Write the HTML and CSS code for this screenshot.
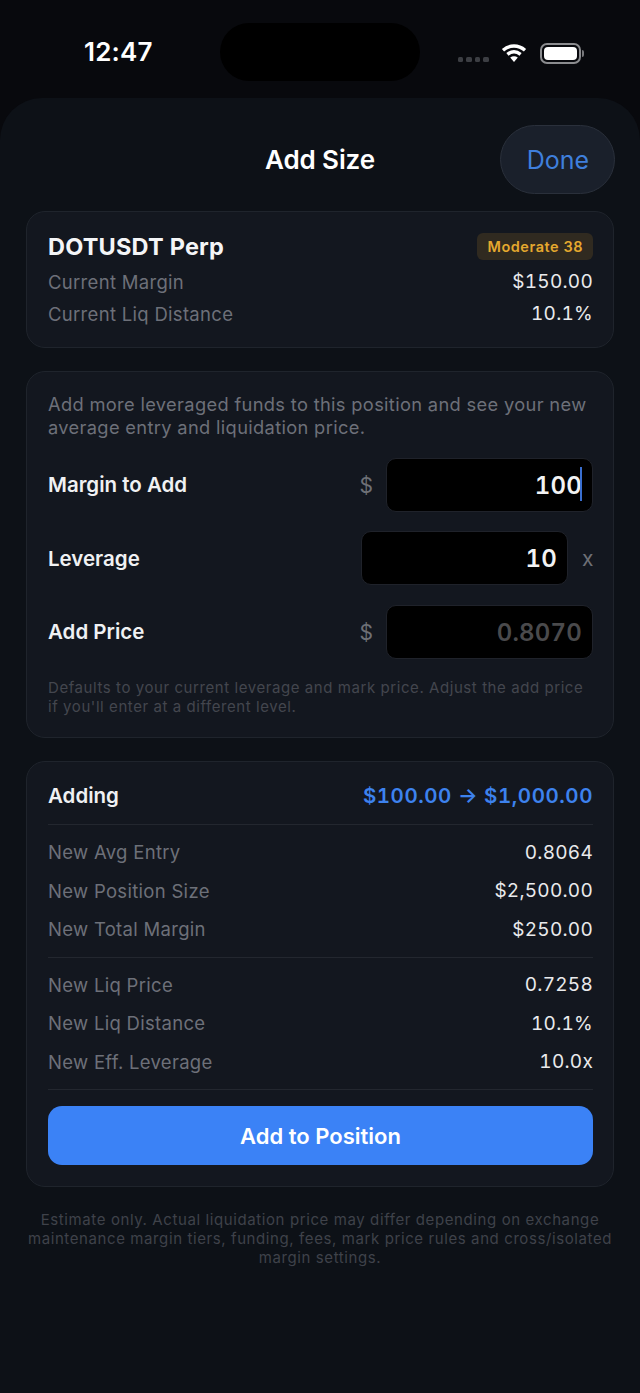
FILE: index.html
```html
<!DOCTYPE html>
<html lang="en">
<head>
<meta charset="utf-8">
<title>Add Size</title>
<link rel="stylesheet" href="styles.css">
</head>
<body>
<div class="screen">
  <div class="status">
    <span class="time">12:47</span>
    <div class="island"></div>
    <div class="status-icons">
      <div class="signal"><i></i><i></i><i></i><i></i></div>
      <svg class="wifi" width="26" height="20" viewBox="0 0 26 20"><path d="M2 7.2C8.6 1.6 17.4 1.6 24 7.2" fill="none" stroke="#fff" stroke-width="3.4"/><path d="M6.4 11.4C10.6 8 15.4 8 19.6 11.4" fill="none" stroke="#fff" stroke-width="3.4"/><path d="M9.2 14.6C11.6 12.8 14.4 12.8 16.8 14.6L13 19Z" fill="#fff"/></svg>
      <div class="battery"><div class="battery-fill"></div></div>
      <div class="battery-cap"></div>
    </div>
  </div>
  <main class="sheet">
    <header class="head">
      <h1 class="title">Add Size</h1>
      <button class="done">Done</button>
    </header>
    <section class="card card-a">
      <div class="row-top">
        <span class="symbol">DOTUSDT Perp</span>
        <span class="badge">Moderate 38</span>
      </div>
      <div class="row row-a"><span class="lbl">Current Margin</span><span class="val">$150.00</span></div>
      <div class="row row-a"><span class="lbl">Current Liq Distance</span><span class="val">10.1%</span></div>
    </section>
    <section class="card card-b">
      <p class="intro">Add more leveraged funds to this position and see your new average entry and liquidation price.</p>
      <div class="field">
        <span class="field-lbl">Margin to Add</span>
        <span class="unit unit-l">$</span>
        <div class="input"><span class="typed">100</span><span class="caret"></span></div>
      </div>
      <div class="field">
        <span class="field-lbl">Leverage</span>
        <div class="input input-wide"><span>10</span></div>
        <span class="unit unit-r">x</span>
      </div>
      <div class="field">
        <span class="field-lbl">Add Price</span>
        <span class="unit unit-l">$</span>
        <div class="input input-ph"><span>0.8070</span></div>
      </div>
      <p class="hint">Defaults to your current leverage and mark price. Adjust the add price if you'll enter at a different level.</p>
    </section>
    <section class="card card-c">
      <div class="adding">
        <span class="adding-lbl">Adding</span>
        <span class="adding-val">$100.00 → $1,000.00</span>
      </div>
      <div class="group">
        <div class="row row-c"><span class="lbl">New Avg Entry</span><span class="val">0.8064</span></div>
        <div class="row row-c"><span class="lbl">New Position Size</span><span class="val">$2,500.00</span></div>
        <div class="row row-c"><span class="lbl">New Total Margin</span><span class="val">$250.00</span></div>
      </div>
      <div class="group">
        <div class="row row-c"><span class="lbl">New Liq Price</span><span class="val">0.7258</span></div>
        <div class="row row-c"><span class="lbl">New Liq Distance</span><span class="val">10.1%</span></div>
        <div class="row row-c"><span class="lbl">New Eff. Leverage</span><span class="val">10.0x</span></div>
      </div>
      <div class="action-wrap"><button class="action">Add to Position</button></div>
    </section>
    <p class="foot">Estimate only. Actual liquidation price may differ depending on exchange maintenance margin tiers, funding, fees, mark price rules and cross/isolated margin settings.</p>
  </main>
</div>
</body>
</html>
```
FILE: styles.css
```css
* { box-sizing: border-box; }
html, body { margin: 0; padding: 0; background: #08090d; }
body { font-family: Inter, "Liberation Sans", sans-serif; color: #fff; }
.screen { width: 640px; height: 1393px; overflow: hidden; position: relative; background: #08090d; }

.status { height: 98px; display: flex; justify-content: space-between; padding: 35px 56px 0 84px; }
.time { font-size: 26px; font-weight: 600; line-height: 34px; color: #fff; letter-spacing: 0.2px; }
.island { position: absolute; left: 220px; top: 23px; width: 200px; height: 58px; border-radius: 29px; background: #000; }
.status-icons { display: flex; align-items: center; height: 34px; padding-top: 2px; }
.signal { display: flex; gap: 3px; margin-right: 12px; margin-top: 13px; }
.signal i { width: 5.6px; height: 5.6px; border-radius: 1.5px; background: #3c3e43; }
.wifi { margin-right: 13px; margin-top: -1px; }
.battery { width: 41px; height: 21px; border: 2px solid #8b8c8f; border-radius: 7px; padding: 2px; }
.battery-fill { width: 100%; height: 100%; background: #fff; border-radius: 4px; }
.battery-cap { width: 2px; height: 7px; background: #77787b; border-radius: 0 2px 2px 0; margin-left: 1px; }

.sheet { height: 1295px; border-radius: 42px 42px 0 0; background: #0d1117; padding: 0 26px; }
.head { height: 113px; display: flex; align-items: center; justify-content: center; position: relative; padding-top: 10px; }
.title { margin: 0; font-size: 26px; font-weight: 600; line-height: 32px; color: #fff; letter-spacing: -0.1px; }
.done { position: absolute; right: -1px; top: 27px; width: 115px; height: 69px; border-radius: 34.5px; border: 1.5px solid #2a303b; background: #1a202b; color: #3f7fdc; font-family: inherit; font-size: 25px; font-weight: 400; padding: 0 0 0 1px; }

.card { background: #13171f; border: 1.5px solid #1f242c; border-radius: 19px; padding: 0 20px 0 21px; margin-bottom: 23px; }
.card-a { height: 137px; }
.card-b { height: 367px; }
.card-c { height: 426px; }

.row-top { display: flex; justify-content: space-between; align-items: center; padding-top: 20px; height: 49px; margin-bottom: 4.5px; }
.symbol { font-size: 23.5px; font-weight: 700; color: #f4f5f7; line-height: 30px; letter-spacing: 0.2px; }
.badge { font-size: 14.5px; font-weight: 600; color: #e5a82e; background: #302a20; border-radius: 6px; padding: 0 10px; line-height: 27px; height: 27px; letter-spacing: 0.55px; }
.row { display: flex; justify-content: space-between; align-items: center; }
.row-a { height: 32px; }
.lbl { font-size: 18.5px; color: #6d7079; letter-spacing: 0.3px; }
.val { font-size: 19px; color: #e9eaec; letter-spacing: 0.25px; font-variant-numeric: tabular-nums; }

.intro { margin: 0; padding-top: 21px; font-size: 18.3px; line-height: 23px; color: #6d7079; letter-spacing: 0.33px; }
.card-b .intro { margin-bottom: 18.5px; }
.field { display: flex; align-items: center; height: 54px; margin-bottom: 19.5px; }
.field-lbl { flex: 1; font-size: 20.5px; font-weight: 600; color: #f0f1f3; }
.unit { font-size: 21px; color: #6e7076; padding-top: 1px; }
.unit-l { margin-right: 13px; }
.unit-r { margin-left: 14px; width: 11px; }
.input { width: 207px; height: 54px; background: #000; border: 1px solid #1f222a; border-radius: 10px; display: flex; align-items: center; justify-content: flex-end; padding: 1px 10px 0 0; font-size: 24px; font-weight: 600; color: #f2f2f3; letter-spacing: 0.2px; font-variant-numeric: tabular-nums; position: relative; }
.input-ph { color: #4a4a4c; }
.caret { position: absolute; right: 10px; top: 8px; width: 2px; height: 34px; background: #3a6fd0; }
.hint { margin: 1px 0 0; font-size: 15px; line-height: 19px; color: #43464e; letter-spacing: 0.57px; }

.adding { display: flex; justify-content: space-between; align-items: center; height: 62px; padding-top: 4px; }
.adding-lbl { font-size: 20.5px; font-weight: 600; color: #f0f1f3; }
.adding-val { font-size: 20.5px; font-weight: 600; color: #3d82ee; letter-spacing: 0.55px; font-variant-numeric: tabular-nums; }
.group { border-top: 1.5px solid #23272f; padding: 8px 0; }
.row-c { height: 38.5px; }
.action-wrap { border-top: 1.5px solid #23272f; padding-top: 16px; }
.action { display: block; width: 100%; height: 59px; background: #3b82f6; border: none; border-radius: 14px; color: #fff; font-family: inherit; font-size: 22px; font-weight: 600; }

.foot { margin: 0 -4px; text-align: center; font-size: 15px; line-height: 19.2px; color: #3f424a; letter-spacing: 0.6px; }
```
